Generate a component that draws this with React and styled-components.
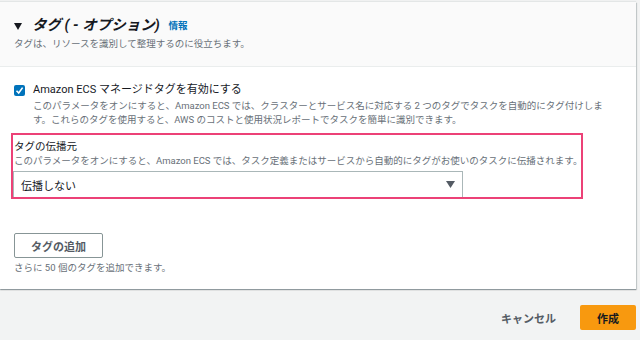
import React from 'react';
import styled, { createGlobalStyle } from 'styled-components';

const COLORS = {
  text: '#16191f',
  muted: '#687078',
  link: '#0073bb',
  border: '#aab7b8',
  pink: '#ec4177',
  orange: '#f8990f',
  pageBg: '#f2f3f3',
  headerBg: '#fafafa',
};

const GlobalStyle = createGlobalStyle`
  html, body {
    margin: 0;
    padding: 0;
    background: ${COLORS.pageBg};
    width: 640px;
    height: 340px;
    overflow: hidden;
    font-family: Roboto, "Noto Sans CJK JP", sans-serif;
    color: ${COLORS.text};
  }
  * { box-sizing: border-box; }
`;

const App = () => {
  return (
    <>
      <GlobalStyle />
      <Page>
        <Panel>
          <Header>
            <TitleRow>
              <Caret viewBox='0 0 8 7'>
                <path d='M0 0 H8 L4 7 Z' fill={COLORS.text} />
              </Caret>
              <Title>タグ ( - オプション)</Title>
              <InfoLink>情報</InfoLink>
            </TitleRow>
            <HeaderDesc>タグは、リソースを識別して整理するのに役立ちます。</HeaderDesc>
          </Header>
          <Body>
            <CheckRow>
              <Checkbox>
                <svg width='9' height='9' viewBox='0 0 9 9'>
                  <path d='M1.5 4.8 L3.7 7 L7.6 1.6' stroke='#fff' strokeWidth='1.6' fill='none' />
                </svg>
              </Checkbox>
              <CheckText>
                <CheckLabel>Amazon ECS マネージドタグを有効にする</CheckLabel>
                <Desc>
                  このパラメータをオンにすると、Amazon ECS では、クラスターとサービス名に対応する 2 つのタグでタスクを自動的にタグ付けしま
                  <br />
                  す。これらのタグを使用すると、AWS のコストと使用状況レポートでタスクを簡単に識別できます。
                </Desc>
              </CheckText>
            </CheckRow>
            <Highlight>
              <FieldLabel>タグの伝播元</FieldLabel>
              <Desc>このパラメータをオンにすると、Amazon ECS では、タスク定義またはサービスから自動的にタグがお使いのタスクに伝播されます。</Desc>
              <Select>
                <span>伝播しない</span>
                <svg width='9' height='7' viewBox='0 0 9 7'>
                  <path d='M0 0 H9 L4.5 7 Z' fill='#545b64' />
                </svg>
              </Select>
            </Highlight>
            <AddButton>タグの追加</AddButton>
            <Hint>さらに 50 個のタグを追加できます。</Hint>
          </Body>
        </Panel>
        <Footer>
          <CancelButton>キャンセル</CancelButton>
          <PrimaryButton>作成</PrimaryButton>
        </Footer>
      </Page>
    </>
  );
};

const Page = styled.div`
  padding-top: 2px;
`;

const Panel = styled.section`
  margin-right: 4px;
  background: #fff;
  box-shadow: 0 1px 1px 0 rgba(0, 28, 36, 0.3), 1px 1px 1px 0 rgba(0, 28, 36, 0.15),
    0 -1px 1px 0 rgba(0, 28, 36, 0.06);
`;

const Header = styled.div`
  height: 65px;
  padding: 15px 14px 0;
  background: ${COLORS.headerBg};
  border-bottom: 1px solid #eaeded;
`;

const TitleRow = styled.div`
  display: flex;
  align-items: center;
  height: 18px;
`;

const Caret = styled.svg`
  width: 8px;
  height: 7px;
  margin-right: 10px;
`;

const Title = styled.h2`
  margin: 0;
  font-size: 14.5px;
  line-height: 18px;
  font-weight: 700;
  font-style: italic;
`;

const InfoLink = styled.a`
  margin-left: 9px;
  font-size: 9.5px;
  font-weight: 700;
  color: ${COLORS.link};
  line-height: 18px;
`;

const HeaderDesc = styled.p`
  margin: 2px 0 0;
  font-size: 9.5px;
  line-height: 13px;
  color: ${COLORS.muted};
`;

const Body = styled.div`
  padding: 16px 14px 15px;
`;

const CheckRow = styled.div`
  display: flex;
  gap: 8px;
`;

const Checkbox = styled.span`
  display: flex;
  align-items: center;
  justify-content: center;
  flex: none;
  width: 11px;
  height: 11px;
  margin-top: 2px;
  border-radius: 2px;
  background: ${COLORS.link};
`;

const CheckText = styled.div`
  display: flex;
  flex-direction: column;
`;

const CheckLabel = styled.div`
  font-size: 11px;
  line-height: 14px;
`;

const Desc = styled.p`
  margin: 2px 0 0;
  font-size: 9.5px;
  line-height: 14px;
  color: ${COLORS.muted};
  white-space: nowrap;
`;

const Highlight = styled.div`
  width: 572px;
  margin: 6px 0 0 -3px;
  padding: 5px 0 0 1px;
  border: 2px solid ${COLORS.pink};

  ${Desc} {
    margin: 0;
    line-height: 13px;
  }
`;

const FieldLabel = styled.div`
  font-size: 10.5px;
  line-height: 14px;
`;

const Select = styled.div`
  display: flex;
  align-items: center;
  justify-content: space-between;
  width: 450px;
  height: 26px;
  margin: 4px 0 0 -1px;
  padding: 0 7px;
  border: 1px solid ${COLORS.border};
  border-bottom: none;
  font-size: 11px;
`;

const AddButton = styled.button`
  display: block;
  width: 89px;
  height: 25px;
  margin-top: 34px;
  padding: 0;
  background: #fff;
  border: 1px solid #879596;
  border-radius: 2px;
  font-family: inherit;
  font-size: 11px;
  font-weight: 700;
  color: #545b64;
`;

const Hint = styled.p`
  margin: 3px 0 0;
  font-size: 9.5px;
  line-height: 13px;
  color: ${COLORS.muted};
`;

const Footer = styled.div`
  display: flex;
  justify-content: flex-end;
  align-items: center;
  gap: 24px;
  padding: 16px 4px 0 0;
`;

const CancelButton = styled.span`
  font-size: 11px;
  font-weight: 700;
  color: #545b64;
`;

const PrimaryButton = styled.button`
  width: 56px;
  height: 25px;
  padding: 0;
  border: none;
  border-radius: 2px;
  background: ${COLORS.orange};
  font-family: inherit;
  font-size: 11px;
  font-weight: 700;
  color: ${COLORS.text};
`;

export default App;
